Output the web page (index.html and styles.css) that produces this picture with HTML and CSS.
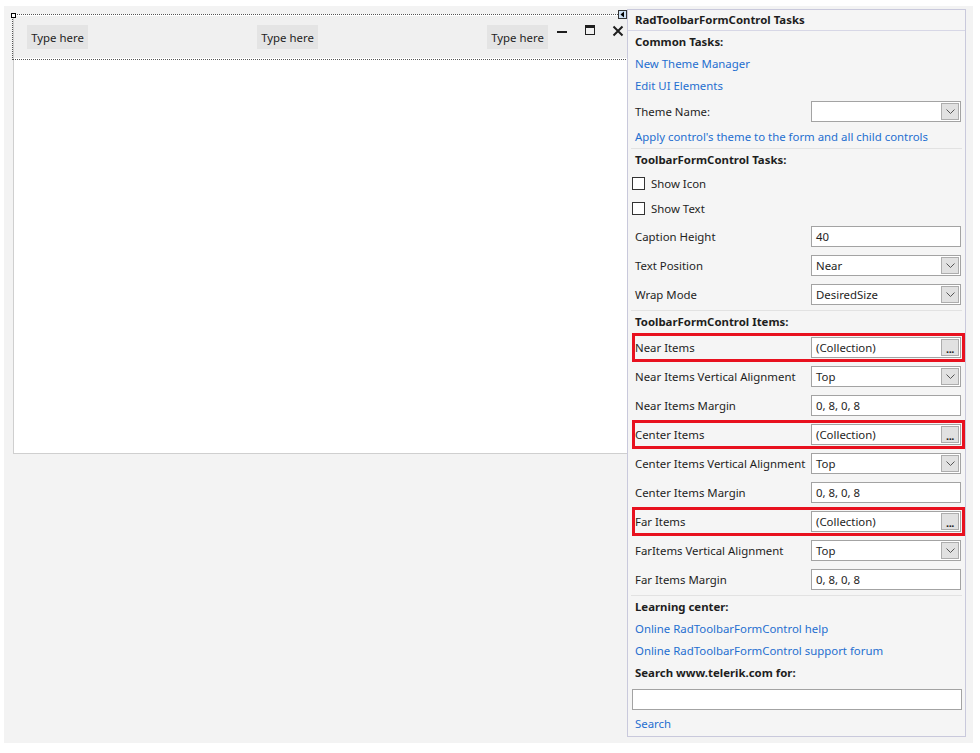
FILE: index.html
```html
<!DOCTYPE html>
<html>
<head>
<meta charset="utf-8">
<link rel="stylesheet" href="styles.css">
</head>
<body>
<div class="canvas">
  <div class="form">
    <div class="titlebar">
      <div class="typehere">Type here</div>
      <div class="typehere">Type here</div>
      <div class="typehere">Type here</div>
      <svg class="winbtns" width="75" height="14" viewBox="0 0 75 14">
        <rect x="4" y="7" width="10" height="2" fill="#1e1e1e"/>
        <rect x="32.5" y="1.5" width="9" height="9" fill="none" stroke="#1e1e1e" stroke-width="1"/>
        <rect x="32" y="1" width="10" height="3" fill="#1e1e1e"/>
        <path d="M60.5 2.5 L69.5 11.5 M69.5 2.5 L60.5 11.5" stroke="#1e1e1e" stroke-width="2"/>
      </svg>
    </div>
    <div class="selection"></div>
    <div class="handle"></div>
  </div>

  <div class="smarttag">
    <svg width="7" height="7" viewBox="0 0 7 7"><path d="M5 0.5 L1.5 3.5 L5 6.5 Z" fill="#000"/></svg>
  </div>

  <div class="panel">
    <div class="panel-title">RadToolbarFormControl Tasks</div>
    <div class="panel-body">
      <div class="line bold">Common Tasks:</div>
      <div class="line link">New Theme Manager</div>
      <div class="line link">Edit UI Elements</div>
      <div class="prop">
        <span class="label">Theme Name:</span>
        <div class="combo"><span class="val"></span><span class="dd"><svg width="9" height="6" viewBox="0 0 9 6"><path d="M0.5 0.5 L4.5 4.5 L8.5 0.5" fill="none" stroke="#555" stroke-width="1"/></svg></span></div>
      </div>
      <div class="line link">Apply control's theme to the form and all child controls</div>
      <div class="sep"></div>
      <div class="line bold">ToolbarFormControl Tasks:</div>
      <div class="checks">
        <div class="check"><span class="box"></span><span>Show Icon</span></div>
        <div class="check"><span class="box"></span><span>Show Text</span></div>
      </div>
      <div class="prop">
        <span class="label">Caption Height</span>
        <div class="text">40</div>
      </div>
      <div class="prop">
        <span class="label">Text Position</span>
        <div class="combo"><span class="val">Near</span><span class="dd"><svg width="9" height="6" viewBox="0 0 9 6"><path d="M0.5 0.5 L4.5 4.5 L8.5 0.5" fill="none" stroke="#555" stroke-width="1"/></svg></span></div>
      </div>
      <div class="prop">
        <span class="label">Wrap Mode</span>
        <div class="combo"><span class="val">DesiredSize</span><span class="dd"><svg width="9" height="6" viewBox="0 0 9 6"><path d="M0.5 0.5 L4.5 4.5 L8.5 0.5" fill="none" stroke="#555" stroke-width="1"/></svg></span></div>
      </div>
      <div class="sep sep2"></div>
      <div class="line bold">ToolbarFormControl Items:</div>
      <div class="prop hl">
        <span class="label">Near Items</span>
        <div class="combo"><span class="val">(Collection)</span><span class="dd ell">...</span></div>
      </div>
      <div class="prop">
        <span class="label">Near Items Vertical Alignment</span>
        <div class="combo"><span class="val">Top</span><span class="dd"><svg width="9" height="6" viewBox="0 0 9 6"><path d="M0.5 0.5 L4.5 4.5 L8.5 0.5" fill="none" stroke="#555" stroke-width="1"/></svg></span></div>
      </div>
      <div class="prop">
        <span class="label">Near Items Margin</span>
        <div class="text">0, 8, 0, 8</div>
      </div>
      <div class="prop hl">
        <span class="label">Center Items</span>
        <div class="combo"><span class="val">(Collection)</span><span class="dd ell">...</span></div>
      </div>
      <div class="prop">
        <span class="label">Center Items Vertical Alignment</span>
        <div class="combo"><span class="val">Top</span><span class="dd"><svg width="9" height="6" viewBox="0 0 9 6"><path d="M0.5 0.5 L4.5 4.5 L8.5 0.5" fill="none" stroke="#555" stroke-width="1"/></svg></span></div>
      </div>
      <div class="prop">
        <span class="label">Center Items Margin</span>
        <div class="text">0, 8, 0, 8</div>
      </div>
      <div class="prop hl">
        <span class="label">Far Items</span>
        <div class="combo"><span class="val">(Collection)</span><span class="dd ell">...</span></div>
      </div>
      <div class="prop">
        <span class="label">FarItems Vertical Alignment</span>
        <div class="combo"><span class="val">Top</span><span class="dd"><svg width="9" height="6" viewBox="0 0 9 6"><path d="M0.5 0.5 L4.5 4.5 L8.5 0.5" fill="none" stroke="#555" stroke-width="1"/></svg></span></div>
      </div>
      <div class="prop">
        <span class="label">Far Items Margin</span>
        <div class="text">0, 8, 0, 8</div>
      </div>
      <div class="sep sep3"></div>
      <div class="line bold">Learning center:</div>
      <div class="line link">Online RadToolbarFormControl help</div>
      <div class="line link">Online RadToolbarFormControl support forum</div>
      <div class="line bold">Search www.telerik.com for:</div>
      <div class="searchrow"><div class="search-input"></div></div>
      <div class="line link last">Search</div>
    </div>
  </div>
</div>
</body>
</html>
```
FILE: styles.css
```css
* { box-sizing: border-box; }
html, body { margin: 0; padding: 0; background: #fff; }
body {
  font-family: "Noto Sans", "Open Sans", sans-serif;
  font-size: 11.4px;
  color: #1e1e1e;
}
.canvas {
  position: relative;
  margin: 6px 0 0 4px;
  width: 969px;
  height: 737px;
  background: #f3f3f3;
  overflow: hidden;
}
.form {
  position: relative;
  margin: 8px 0 0 9px;
  width: 650px;
  height: 440px;
  background: #fff;
  border-left: 1px solid #cfcfcf;
  border-bottom: 1px solid #cfcfcf;
  padding-top: 2px;
}
.titlebar {
  height: 42px;
  background: #f0f0f0;
  display: flex;
  align-items: flex-start;
  padding: 9px 0 0 13px;
  gap: 169px;
}
.typehere {
  width: 61px;
  height: 24px;
  background: #e4e4e4;
  display: flex;
  align-items: center;
  justify-content: center;
}
.winbtns {
  margin-left: -164px;
  margin-top: -1px;
}
.selection {
  position: absolute;
  left: -2px;
  top: 0;
  width: 700px;
  height: 46px;
  border: 1px dotted #555;
}
.handle {
  position: absolute;
  left: -3px;
  top: -1px;
  width: 5px;
  height: 5px;
  background: #fff;
  border: 1px solid #000;
}
.smarttag {
  position: absolute;
  left: 614px;
  top: 4px;
  width: 9px;
  height: 9px;
  background: #cfe2f5;
  border: 1px solid #333;
  display: flex;
  align-items: center;
  justify-content: center;
}
.smarttag svg { display: block; }
.panel {
  position: absolute;
  left: 623px;
  top: 3px;
  width: 339px;
  height: 728px;
  background: #f5f5f5;
  border: 1px solid #c9c9dc;
}
.panel-title {
  height: 21px;
  padding-left: 7px;
  font-weight: bold;
  line-height: 20px;
  border-bottom: 1px solid #d7d7e6;
}
.panel-body {
  padding: 0 0 0 4px;
}
.line {
  height: 22px;
  line-height: 21px;
  padding-left: 3px;
  white-space: nowrap;
}
.bold { font-weight: bold; }
.link { color: #1f6fd0; }
.prop {
  height: 29px;
  display: flex;
  align-items: center;
  justify-content: space-between;
  padding: 0 4px 0 3px;
}
.prop.hl {
  border: 3px solid #e8111f;
  padding: 0 1px 0 0;
}
.label { white-space: nowrap; }
.combo, .text {
  width: 150px;
  height: 21px;
  background: #fff;
  border: 1px solid #a3a3a3;
  display: flex;
  align-items: center;
  justify-content: space-between;
  padding: 0 1px 0 4px;
  white-space: nowrap;
}
.combo .dd {
  width: 18px;
  height: 17px;
  background: #e1e1e1;
  border: 1px solid #adadad;
  display: flex;
  align-items: center;
  justify-content: center;
}
.combo .dd svg { display: block; }
.combo .ell {
  font-size: 11px;
  line-height: 13px;
  align-items: flex-end;
  letter-spacing: -0.5px;
  font-weight: bold;
}
.sep {
  height: 1px;
  background: #e2e2e2;
  margin: 0 3px 0 -1px;
}
.sep2 { margin-top: 1px; }
.sep3 { margin-top: 1px; }
.checks { padding-bottom: 1px; }
.check {
  height: 25px;
  display: flex;
  align-items: center;
  gap: 6px;
  white-space: nowrap;
}
.check .box {
  width: 13px;
  height: 13px;
  background: #fff;
  border: 1px solid #333;
}
.searchrow {
  height: 30px;
  padding-top: 5px;
  padding-right: 3px;
}
.search-input {
  height: 21px;
  background: #fff;
  border: 1px solid #a3a3a3;
}
.last { line-height: 20px; }
```
